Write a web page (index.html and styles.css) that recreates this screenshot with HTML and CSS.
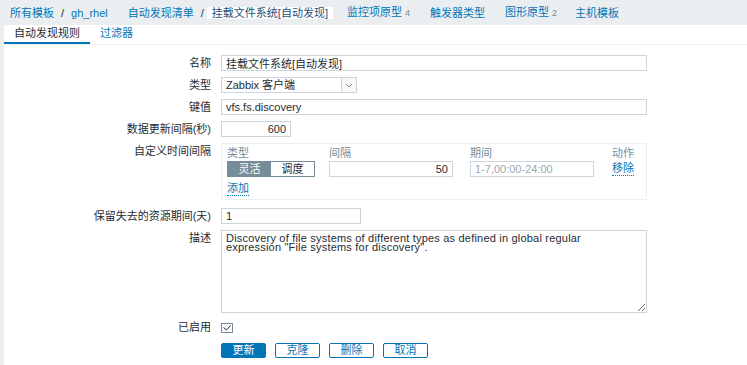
FILE: index.html
```html
<!DOCTYPE html>
<html lang="zh">
    <head>
        <meta charset="UTF-8" />
        <meta name="viewport" content="width=device-width, initial-scale=1.0" />
        <link rel="stylesheet" href="styles.css">
    </head>
    <body>
        <ul class="nav">
            <li class="crumbs first"><a href="#">所有模板</a><span class="sep">/</span><a href="#">gh_rhel</a></li>
            <li class="crumbs second"><a href="#">自动发现清单</a><span class="sep">/</span></li>
            <li class="current">挂载文件系统[自动发现]</li>
            <li class="item items"><a href="#">监控项原型</a><sup>4</sup></li>
            <li class="item"><a href="#">触发器类型</a></li>
            <li class="item"><a href="#">图形原型</a><sup>2</sup></li>
            <li class="item hosts"><a href="#">主机模板</a></li>
        </ul>
        <div class="page">
            <div class="tabs">
                <span class="tab active">自动发现规则</span>
                <a class="tab" href="#">过滤器</a>
            </div>
            <form class="form">
                <label>名称</label>
                <input class="wide" type="text" value="挂载文件系统[自动发现]">

                <label>类型</label>
                <div class="select">
                    <span class="value">Zabbix 客户端</span>
                    <span class="arrow">
                        <svg width="8" height="5" viewBox="0 0 8 5"><path d="M1 1l3 3 3-3" fill="none" stroke="#768d99" stroke-width="1"/></svg>
                    </span>
                </div>

                <label>键值</label>
                <input class="wide" type="text" value="vfs.fs.discovery">

                <label>数据更新间隔(秒)</label>
                <input class="num delay" type="text" value="600">

                <label>自定义时间间隔</label>
                <div class="intervals">
                    <div class="grid">
                        <span class="head">类型</span>
                        <span class="head">间隔</span>
                        <span class="head">期间</span>
                        <span class="head">动作</span>

                        <div class="seg">
                            <span class="on">灵活</span>
                            <span>调度</span>
                        </div>
                        <input class="num cell" type="text" value="50">
                        <input class="cell" type="text" placeholder="1-7,00:00-24:00">
                        <a class="link" href="#">移除</a>
                    </div>
                    <a class="link add" href="#">添加</a>
                </div>

                <label>保留失去的资源期间(天)</label>
                <input class="keep" type="text" value="1">

                <label>描述</label>
                <textarea>Discovery of file systems of different types as defined in global regular
expression "File systems for discovery".</textarea>

                <label>已启用</label>
                <span class="check">
                    <svg width="12" height="10" viewBox="0 0 12 10">
                        <rect x="0.5" y="0.5" width="11" height="9" fill="#fff" stroke="#768d99"/>
                        <path d="M2.5 4.5l3 2.5 4-4.5" fill="none" stroke="#1f2c33" stroke-width="1"/>
                    </svg>
                </span>

                <span></span>
                <div class="buttons">
                    <button type="button" class="btn main">更新</button>
                    <button type="button" class="btn">克隆</button>
                    <button type="button" class="btn">删除</button>
                    <button type="button" class="btn">取消</button>
                </div>
            </form>
        </div>
    </body>
</html>
```

FILE: styles.css
```css
:root {
    --blue: #0275b8;
    --text: #1f2c33;
    --grey: #768d99;
    --line: #ccd5d9;
    --bg: #ebeef0;
}
* {
    box-sizing: border-box;
}
body {
    margin: 0;
    height: 365px;
    overflow: hidden;
    background-color: var(--bg);
    color: var(--text);
    font-family: "Liberation Sans", "Noto Sans CJK SC", sans-serif;
    font-size: 11px;
}
a {
    color: var(--blue);
    text-decoration: none;
}
.nav {
    display: flex;
    align-items: center;
    height: 25px;
    margin: 0;
    padding: 0 0 0 10px;
    list-style: none;
    line-height: 12px;
}
.nav .sep {
    margin: 0 7px;
    color: var(--text);
}
.nav .second {
    margin-left: 20px;
}
.nav .second .sep {
    margin-right: 0;
}
.nav .current {
    margin-left: 3px;
    padding: 0 5px;
    background-color: #fff;
    color: #1f4f7a;
}
.nav .item {
    margin-left: 20px;
}
.nav .items {
    margin-left: 14px;
}
.nav .hosts {
    margin-left: 18px;
}
.nav sup {
    margin-left: 3px;
    font-size: 9px;
    vertical-align: baseline;
    color: var(--grey);
}
.page {
    margin-left: 4px;
    height: 340px;
    background-color: #fff;
}
.tabs {
    display: flex;
    height: 20px;
    border-bottom: 1px solid #eef0f2;
}
.tab {
    height: 19px;
    padding: 0 10px;
    line-height: 17px;
    border-bottom: 2px solid transparent;
}
.tab.active {
    border-bottom-color: var(--blue);
    color: var(--text);
}
.form {
    display: grid;
    grid-template-columns: 207px 1fr;
    column-gap: 10px;
    row-gap: 6px;
    align-items: start;
    padding-top: 10px;
}
.form label {
    text-align: right;
    line-height: 16px;
}
input,
textarea {
    height: 16px;
    margin: 0;
    padding: 0 4px;
    border: 1px solid var(--line);
    border-radius: 0;
    font-family: inherit;
    font-size: 11px;
    color: var(--text);
    outline: none;
}
input::placeholder {
    color: #9aa7ae;
}
.wide {
    width: 426px;
}
.num {
    text-align: right;
}
.delay {
    width: 70px;
}
.keep {
    width: 140px;
}
.select {
    display: flex;
    width: 136px;
    height: 16px;
    border: 1px solid var(--line);
}
.select .value {
    flex: 1;
    padding: 0 4px;
    line-height: 14px;
}
.select .arrow {
    display: flex;
    align-items: center;
    justify-content: center;
    width: 15px;
    border-left: 1px solid var(--line);
    background-color: #f5f7f8;
}
.intervals {
    width: 426px;
    height: 57px;
    margin-bottom: 2px;
    padding: 2px 5px 0;
    border: 1px solid #eceff1;
}
.intervals .grid {
    display: grid;
    grid-template-columns: 102px 141px 142px auto;
    row-gap: 1px;
    align-items: center;
}
.intervals .head {
    line-height: 14px;
    color: var(--grey);
}
.seg {
    display: flex;
    width: 88px;
    height: 16px;
    border: 1px solid var(--grey);
}
.seg span {
    flex: 1;
    line-height: 14px;
    text-align: center;
}
.seg .on {
    background-color: var(--grey);
    color: #fff;
}
.cell {
    width: 124px;
}
.link {
    justify-self: start;
    line-height: 13px;
    border-bottom: 1px dotted var(--blue);
}
.add {
    display: inline-block;
    margin-top: 5px;
}
textarea {
    display: block;
    width: 426px;
    height: 83px;
    padding: 3px 4px;
    font-size: 11px;
    letter-spacing: 0.2px;
    line-height: 9px;
    resize: vertical;
}
.check {
    display: flex;
    align-items: center;
    height: 16px;
    padding-top: 2px;
}
.buttons {
    display: flex;
    gap: 9px;
    margin-top: 2px;
}
.btn {
    width: 45px;
    height: 15px;
    padding: 0;
    border: 1px solid var(--blue);
    border-radius: 2px;
    background-color: #fff;
    color: var(--blue);
    font-family: inherit;
    font-size: 11px;
    line-height: 13px;
}
.btn.main {
    background-color: var(--blue);
    color: #fff;
}
```
